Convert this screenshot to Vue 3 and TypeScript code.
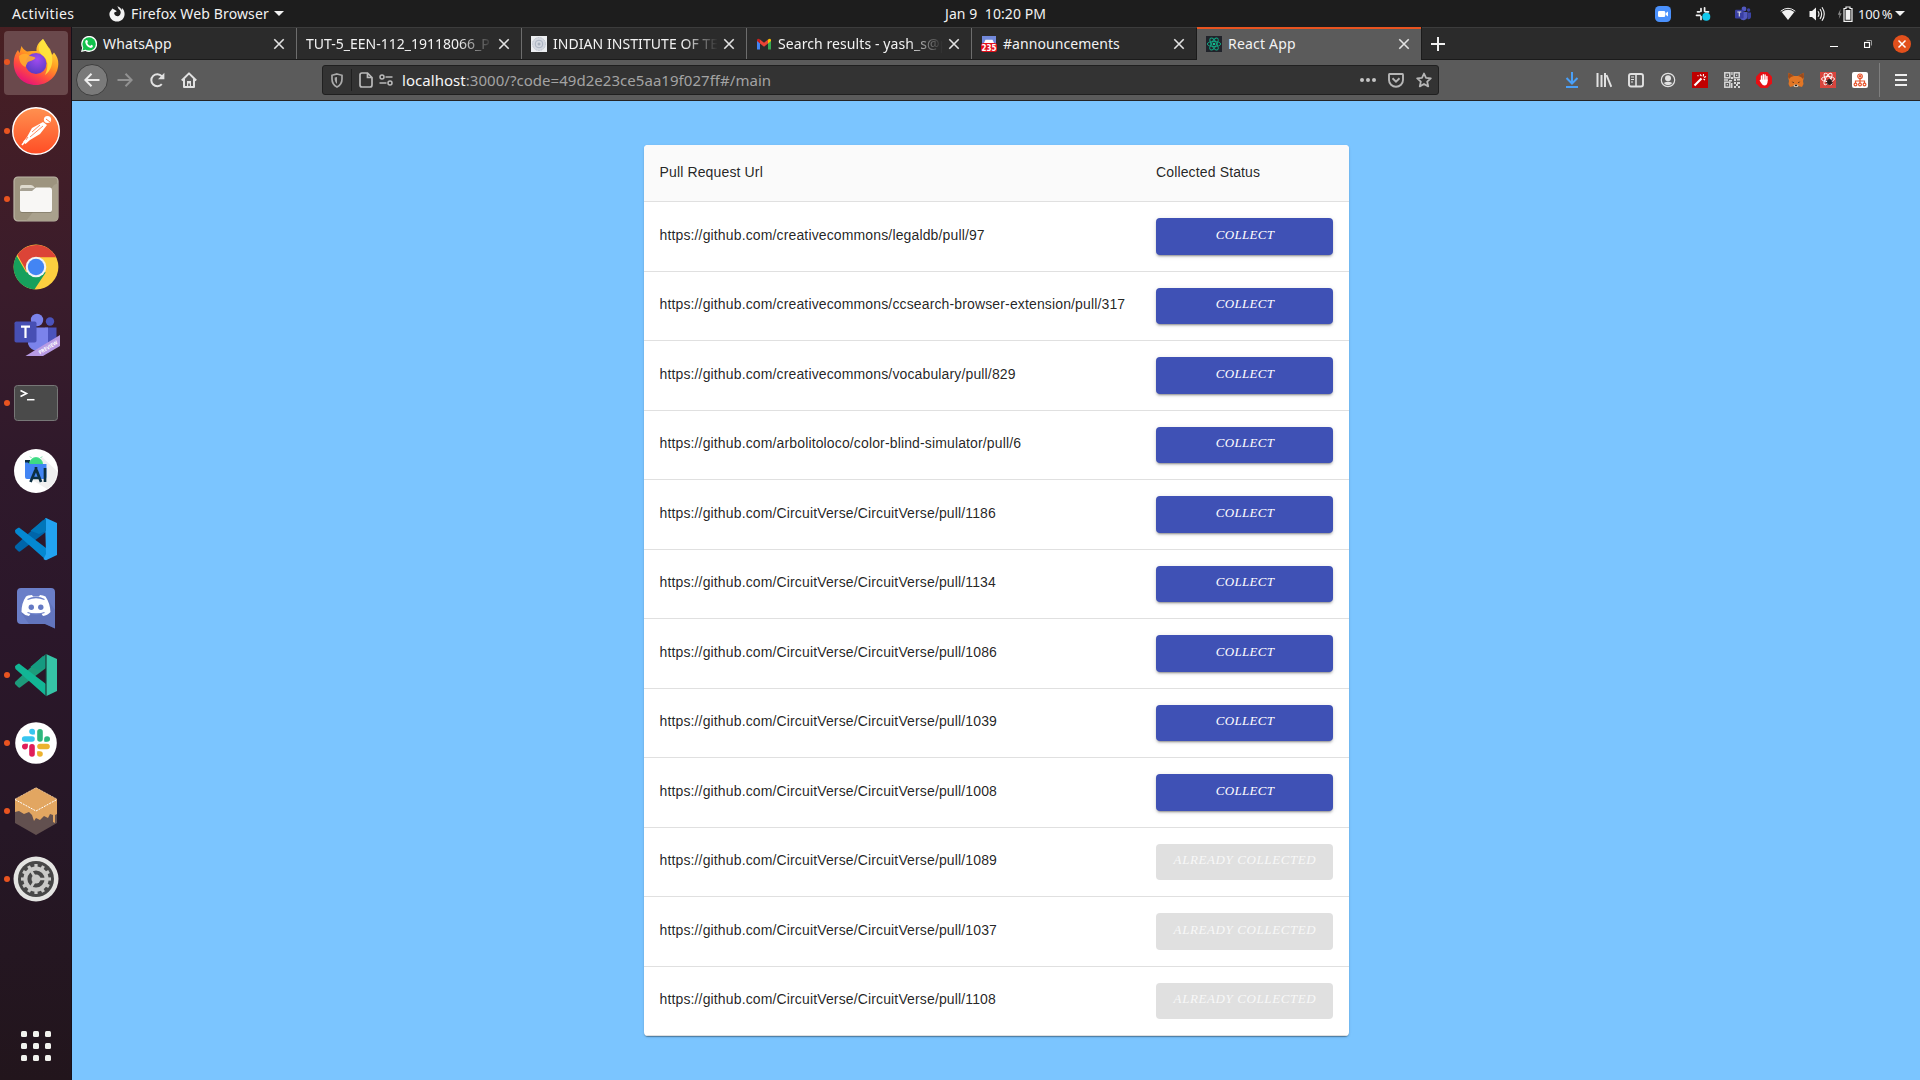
<script setup lang="ts">
interface Tab {
  id: string
  title: string
  spacing: number
  active?: boolean
}

interface PullRequest {
  url: string
  collected: boolean
}

const tabs: Tab[] = [
  { id: 'whatsapp', title: 'WhatsApp', spacing: 0.15 },
  { id: 'tut', title: 'TUT-5_EEN-112_19118066_P', spacing: 0 },
  { id: 'iit', title: 'INDIAN INSTITUTE OF TE', spacing: 0.06 },
  { id: 'gmail', title: 'Search results - yash_s@p', spacing: 0.08 },
  { id: 'discord', title: '#announcements', spacing: 0.06 },
  { id: 'react', title: 'React App', spacing: 0.2, active: true },
]

const gh = 'https://github.com/'
const pulls: PullRequest[] = [
  { url: gh + 'creativecommons/legaldb/pull/97', collected: false },
  { url: gh + 'creativecommons/ccsearch-browser-extension/pull/317', collected: false },
  { url: gh + 'creativecommons/vocabulary/pull/829', collected: false },
  { url: gh + 'arbolitoloco/color-blind-simulator/pull/6', collected: false },
  { url: gh + 'CircuitVerse/CircuitVerse/pull/1186', collected: false },
  { url: gh + 'CircuitVerse/CircuitVerse/pull/1134', collected: false },
  { url: gh + 'CircuitVerse/CircuitVerse/pull/1086', collected: false },
  { url: gh + 'CircuitVerse/CircuitVerse/pull/1039', collected: false },
  { url: gh + 'CircuitVerse/CircuitVerse/pull/1008', collected: false },
  { url: gh + 'CircuitVerse/CircuitVerse/pull/1089', collected: true },
  { url: gh + 'CircuitVerse/CircuitVerse/pull/1037', collected: true },
  { url: gh + 'CircuitVerse/CircuitVerse/pull/1108', collected: true },
]

const teeth = Array.from({ length: 12 }, (_, i) => i * 30)
</script>

<template>
  <div class="desktop">
    <header class="topbar">
      <span class="activities">Activities</span>
      <svg class="app-glyph" width="16" height="16" viewBox="0 0 16 16"><path d="M8 0.4C9 1 9.7 2 9.6 3.1C11.2 3.8 11.6 5.3 11.4 6.6C11 9.6 8.6 10.4 7 9.6C5.6 9 5 7.6 5.6 6.4L8 5.3L5.2 3.5L3.3 2.6L2.4 4C.8 5.600 .3 7 .4 8.500C.7 12.600 4 15.600 8 15.600C12.400 15.600 15.600 12.300 15.600 8C15.600 5.400 14.600 3.200 12.800 2L13.200 4.200C12 2.300 10.500 .5 8 .4Z" fill="#f2f2f2" /><path d="M5.500 6.600C5.200 9.500 7.700 10.700 9.600 9.900C11.300 9.100 11.800 7.300 11.400 5.700C10.700 4.200 9.300 3.700 8.100 3.900L8.600 5.300Z" fill="#1d1d1d" /></svg>
      <span class="app-name">Firefox Web Browser</span>
      <span class="caret"></span>
      <span class="clock">Jan 9&nbsp; 10:20 PM</span>
      <div class="tray">
        <svg width="16" height="16" viewBox="0 0 16 16"><rect width="16" height="16" rx="4.500" fill="#4a90fb" /><rect x="3" y="5" width="7.200" height="6" rx="1.300" fill="#fff" /><path d="M10.600 7.200L13 5.400V10.600L10.600 8.800Z" fill="#fff" /></svg>
        <svg width="16" height="16" viewBox="0 0 16 16"><g stroke="#f2f2f2" stroke-width="1.700" stroke-linecap="round"><path d="M6 2.500V5.300M9.600 1.800V5.300M2.500 5.800H4.500M10.500 5.800H13.500M1.500 9.300H5M6 10.500V13.500M9.500 9.500V13" /></g><circle cx="11.300" cy="10.800" r="4" fill="#12c9ee" /></svg>
        <svg width="16" height="16" viewBox="0 0 16 16"><circle cx="9" cy="3" r="2.400" fill="#5259c0" /><circle cx="13.600" cy="4" r="1.700" fill="#3c44a5" /><path d="M5 6H12.500V11A4 4 0 0 1 5 12Z" fill="#5259c0" /><path d="M12.500 6.500H16V10.500A2.500 2.500 0 0 1 12.500 13Z" fill="#3c44a5" /><rect y="3.800" width="8.600" height="8.600" rx="1" fill="#393fa2" /><path d="M2.300 6H6.300M4.300 6V10.500" stroke="#ddd" stroke-width="1.100" /></svg>
        <svg class="wifi" width="16" height="16" viewBox="0 0 16 16"><path d="M.7 5.200Q8 -.6 15.300 5.200" fill="none" stroke="#f2f2f2" stroke-width="1" /><path d="M1.700 6.100Q8 1.600 14.300 6.100L8 14Z" fill="#f2f2f2" /></svg>
        <svg class="vol" width="17" height="16" viewBox="0 0 17 16"><path d="M.5 5H3L7 1.500V14.500L3 11H.5Z" fill="#f2f2f2" /><path d="M9 5.200Q11 8 9 10.800M11 3Q14.300 8 11 13M13 1.200Q17.500 8 13 14.800" fill="none" stroke="#f2f2f2" stroke-width="1.100" /></svg>
        <svg class="batt" width="16" height="16" viewBox="0 0 16 16"><path d="M3.500 3L.8 8.700H2.500L1.800 13L4.700 7.300H3Z" fill="#888" /><path d="M7 2.500H9V1H13V2.500H15V15.300H7Z" fill="none" stroke="#f2f2f2" stroke-width="1.200" /><rect x="8.600" y="4" width="4.800" height="9.800" fill="#f2f2f2" /></svg>
        <span class="pct">100&thinsp;%</span>
        <span class="caret"></span>
      </div>
    </header>

    <div class="body">
      <nav class="dock">
        <div class="item running focused">
          <svg width="48" height="48" viewBox="0 0 48 48">
            <defs>
              <linearGradient id="ffBody" x1=".8" y1=".1" x2=".3" y2="1"><stop offset="0" stop-color="#ffe23c" /><stop offset=".4" stop-color="#ff9a22" /><stop offset=".7" stop-color="#ff4a40" /><stop offset="1" stop-color="#e5107c" /></linearGradient>
              <radialGradient id="ffCore" cx=".55" cy=".3" r=".7"><stop offset="0" stop-color="#a04bf0" /><stop offset="1" stop-color="#5a3bc4" /></radialGradient>
            </defs>
            <path d="M31 1C33 3 35 8 38 11C39 13 39.500 15 40 17L42 14.500C45 18 46.500 22 46.300 26C46 38 36 47 24 47C11.500 47 1.700 38 1.700 25C1.700 19.500 3.500 15 6 12L7.500 15L9.500 8C10.500 10 12 12 15 13.500C18 12.500 22 13 24.500 13C24 8 27 4 31 1Z" fill="url(#ffBody)" />
            <circle cx="24" cy="25.500" r="10.500" fill="url(#ffCore)" />
            <path d="M7 18C11 15 15 15 17.500 18C20 18 23 19 23.500 20C21 23 17.500 22.500 15.500 24.500C15 26 14 27 13.500 29C9 27 7 23 7 18Z" fill="#ffab2e" opacity=".9" />
            <path d="M31 1C33 5 37 10 39.500 16C42 24 39 33 33 37C37 28 36 21 30 17C25 13 26 6 31 1Z" fill="#ffe640" opacity=".85" />
          </svg>
        </div>
        <div class="item running">
          <svg width="48" height="48" viewBox="0 0 48 48"><defs><linearGradient id="pm" x1="0" y1="0" x2="0" y2="1"><stop offset="0" stop-color="#ff9150" /><stop offset="1" stop-color="#ff4d25" /></linearGradient></defs><circle cx="24" cy="24" r="23.300" fill="url(#pm)" stroke="#fff" stroke-width="1.400" /><circle cx="35.500" cy="12.500" r="3.600" fill="#fff" /><path d="M31 15L20 21L15 30L11 35L13.500 37L18 33L28 27L35 18Z" fill="#fff" /><path d="M31 19L18 30M28 18L20 25M16 30L11 37" stroke="#ff6b37" stroke-width=".8" /><path d="M34 12L38 15" stroke="#ff7b43" stroke-width="1" /><path d="M14 33L10 38" stroke="#fff" stroke-width="1.600" /></svg>
        </div>
        <div class="item running">
          <svg width="48" height="48" viewBox="0 0 48 48"><rect x="2" y="2" width="44" height="44" rx="4" fill="#9d947f" stroke="#bcb6a6" stroke-width="1.200" /><path d="M42 10L46 8V42Q46 46 42 46H14Z" fill="#a9a18d" /><path d="M8 22V12Q8 10 10 10H19Q21 10 23 13H30V22Z" fill="#dedace" /><rect x="8" y="13" width="32" height="25" rx="2.500" fill="#6e6757" opacity=".5" /><path d="M8 16H20L24 12.500H38Q40 12.500 40 15V35Q40 37 38 37H10Q8 37 8 35Z" fill="#f8f7f5" /></svg>
        </div>
        <div class="item">
          <svg width="48" height="48" viewBox="0 0 48 48"><circle cx="24" cy="24" r="22.400" fill="#fccf3f" /><path d="M24 24L14.300 29.600L4.600 12.800A22.400 22.400 0 0 0 22.600 46.350L33.700 29.600Z" fill="#16a05c" /><path d="M24 14.200H44.100A22.400 22.400 0 0 0 5.400 12L14.500 28Z" fill="#dc4437" /><circle cx="24" cy="24" r="10.300" fill="#f3f3f3" /><circle cx="24" cy="24" r="8.200" fill="#4385f3" /></svg>
        </div>
        <div class="item">
          <svg width="48" height="48" viewBox="0 0 48 48"><circle cx="25" cy="9" r="6.200" fill="#7b83eb" /><circle cx="38" cy="10.500" r="4.200" fill="#4b53bc" /><path d="M33 16.500H44.500V31Q42 37 35 35Z" fill="#4b53bc" /><path d="M17 16.500H36V33Q34 41 25.500 40Q18 39 16 33Z" fill="#7b83eb" /><rect x="2.500" y="10.500" width="22" height="21" rx="1.800" fill="#474fb4" /><path d="M9 15.700H18M13.500 15.700V27" stroke="#fff" stroke-width="2.200" /><path d="M13.500 45L48 24V35L31 45Z" fill="#b79be4" /><text transform="translate(28 43.500) rotate(-31)" textLength="21" lengthAdjust="spacingAndGlyphs" font-family="Open Sans, sans-serif" font-size="5.300" font-weight="700" fill="#fff">PREVIEW</text></svg>
        </div>
        <div class="item running">
          <svg width="48" height="48" viewBox="0 0 48 48"><rect x="2.500" y="6.500" width="43" height="35" rx="3" fill="#4a4a4a" stroke="#777" /><path d="M8.500 11.500L14.500 14.500L8.500 17.500" fill="none" stroke="#fff" stroke-width="1.600" /><path d="M15 20.700H22.500" stroke="#fff" stroke-width="1.500" /></svg>
        </div>
        <div class="item">
          <svg width="48" height="48" viewBox="0 0 48 48"><circle cx="24" cy="24" r="22" fill="#fff" /><path d="M30 10L45 24Q45 36 35 42L17 31Z" fill="#f0f0f0" /><path d="M13 13H18V18H13Z" fill="#0c2f42" /><path d="M17.500 17A6.500 6.500 0 0 1 30.500 17ZM19.500 11L18 9.500M28.500 11L30 9.500" fill="#3ddb84" stroke="#3ddb84" stroke-width=".8" /><path d="M13 15.500H16Q17 17 19 17H34.500V30Q34.500 32 33 32H15Q13 32 13 30Z" fill="#4285f4" /><path d="M24 20V24M23.500 23L18.500 35M24.500 23L29 35M20 31H28M33 21V35" stroke="#0c2f42" stroke-width="2.700" fill="none" /></svg>
        </div>
        <div class="item">
          <svg width="48" height="48" viewBox="0 0 48 48"><path d="M3 33Q2.500 31.500 3.500 30.500L31 5L34 17L8 36.500Q7 37 6 36Z" fill="#0065a9" /><path d="M3 16Q2.500 14.500 7 12.500L34 33V45L3.500 18Z" fill="#0488d1" /><path d="M33 3.200L34 3L45 8V40L34 45.200Q32.500 45 31.500 44L34 39Z" fill="#22a3f1" /><path d="M34 3V16L27 19L18.500 15.800Z" fill="#0176ba" /></svg>
        </div>
        <div class="item">
          <svg width="48" height="48" viewBox="0 0 48 48"><path d="M9 5H39Q43 5 43 9V45.500L33 41H9Q5 41 5 37V9Q5 5 9 5Z" fill="#6a7ec8" /><path d="M16 13L10 31L17 41H33L43 45.500V27L34 14Z" fill="#5265a8" opacity=".35" /><path d="M16 12.500Q18 12 20 12L21 13.500H27L28 12Q31 12 33.500 13.500Q38 20 38.500 29Q35.500 32.500 31 33L29.300 30.500H18.700L17 33Q12 32 9.500 29Q9.500 20 14 13.500Z" fill="#fff" /><circle cx="19.300" cy="24.300" r="2.700" fill="#6479c4" /><circle cx="28.800" cy="24.300" r="2.700" fill="#6479c4" /><path d="M15.500 16.500Q24 12.500 32.500 16.500M15.500 29.500Q24 33 32.500 29.500" stroke="#6a7ec8" stroke-width="1.300" fill="none" /></svg>
        </div>
        <div class="item running">
          <svg width="48" height="48" viewBox="0 0 48 48"><path d="M3 33Q2.500 31.500 3.500 30.500L31 5L34 17L8 36.500Q7 37 6 36Z" fill="#1d9b7b" /><path d="M3 16Q2.500 14.500 7 12.500L34 33V45L3.500 18Z" fill="#12b695" /><path d="M34 3L45 8V40L34 45.200Z" fill="#36c4a6" /><path d="M34 3V16L27 19L18.500 15.800Z" fill="#159a80" /><path d="M34 3V45" stroke="#1c3a37" stroke-width="1.200" /></svg>
        </div>
        <div class="item running">
          <svg width="48" height="48" viewBox="0 0 48 48"><circle cx="24" cy="24" r="20.800" fill="#fff" /><g stroke-width="5.600" stroke-linecap="round"><path d="M12.700 20H20" stroke="#36c5f0" /><path d="M20 12.600H20.200" stroke="#36c5f0" /><path d="M28 12.800V20" stroke="#2eb67d" /><path d="M35 20H35.200" stroke="#2eb67d" /><path d="M28 27.500H35" stroke="#ecb22e" /><path d="M27.900 35H28" stroke="#ecb22e" /><path d="M20 27.800V35" stroke="#e01e5a" /><path d="M12.800 27.600H13" stroke="#e01e5a" /></g><path d="M20 15.400H22.800V12.600Z" fill="#36c5f0" /><path d="M32.300 20V22.800H35Z" fill="#2eb67d" /><path d="M28 32.200H25.200V35Z" fill="#ecb22e" /><path d="M13 24.800H15.800V27.600Z" fill="#e01e5a" /></svg>
        </div>
        <div class="item running">
          <svg width="48" height="48" viewBox="0 0 48 48"><path d="M3 12L24 24L45 12V36L24 48L3 36Z" fill="#62504f" /><path d="M24 .5L45 12V27L43 28V36L41 35V28L38 27L36 31L32 29L28 33L24 31L22 34L20 28L17 25L12 27L7 24L3 25V12Z" fill="#e2a661" /><path d="M3 12.500L24 24L45 12.500" fill="none" stroke="#fff" stroke-width="1" stroke-dasharray="2 1" /><path d="M3 12L24 .7L45 12" fill="none" stroke="#f3dfc8" stroke-width=".5" stroke-dasharray="2 1" /></svg>
        </div>
        <div class="item running">
          <svg width="48" height="48" viewBox="0 0 48 48"><circle cx="24" cy="24" r="22.500" fill="#e4e4e2" /><circle cx="24" cy="24" r="18" fill="#474747" /><g fill="#c9c9c7"><rect v-for="a in teeth" :key="a" x="22.400" y="9" width="3.200" height="5" :transform="`rotate(${a} 24 24)`" /></g><circle cx="24" cy="24" r="10.600" fill="none" stroke="#c9c9c7" stroke-width="4" /><circle cx="24" cy="24" r="4.500" fill="#c9c9c7" /><path d="M24 24L33 24M24 24L19.500 16.500M24 24L19.500 31.500" stroke="#c9c9c7" stroke-width="2.600" /></svg>
        </div>
        <div class="apps"><i v-for="n in 9" :key="n"></i></div>
      </nav>

      <main class="browser">
        <div class="tabs">
          <div v-for="t in tabs" :key="t.id" class="tab" :class="[t.id, { active: t.active }]">
            <svg v-if="t.id === 'whatsapp'" class="fav" width="16" height="16" viewBox="0 0 16 16"><path d="M0 16L1.200 11.800A8 8 0 1 1 4.300 14.900Z" fill="#fff" /><circle cx="8.100" cy="7.900" r="6.700" fill="#12c14c" /><path d="M1.500 14.500L2.500 11L5 13.500Z" fill="#12c14c" /><path d="M5.300 4L6.300 4.200L7 6L6.200 7Q7 9 9.200 9.900L10.200 8.800L12 9.700Q12 11.700 9.900 11.900Q5 11 4.200 6Q4.200 4.600 5.300 4Z" fill="#fff" /></svg>
            <svg v-else-if="t.id === 'iit'" class="fav" width="16" height="16" viewBox="0 0 16 16"><rect width="16" height="16" fill="#eceef1" /><circle cx="8" cy="8" r="6.500" fill="#d4d8e0" stroke="#b9bfca" stroke-width="1" stroke-dasharray="1 .7" /><circle cx="8" cy="8" r="3.800" fill="none" stroke="#aab3c2" stroke-width="1" /><circle cx="8" cy="8" r="1.500" fill="#a6b0bd" /></svg>
            <svg v-else-if="t.id === 'gmail'" class="fav" width="16" height="16" viewBox="0 0 16 16"><path d="M1 4V13.500H4V7Z" fill="#4285f4" /><path d="M12 7V13.500H15V4Z" fill="#34a853" /><path d="M4 3.500L8 6.700L12 3.500V7.500L8 10.700L4 7.500Z" fill="#ea4335" /><path d="M1 5V4Q1.500 2 4 3.500V7.500Z" fill="#c5221f" /><path d="M12 3.500Q14.500 2 15 4V5L12 7.500Z" fill="#fbbc04" /></svg>
            <svg v-else-if="t.id === 'discord'" class="fav" width="16" height="16" viewBox="0 0 16 16"><rect x="1" width="14" height="12" fill="#7289da" /><path d="M3 7L4.500 3.800H11.500L13 7Z" fill="#fff" /><rect y="7" width="16" height="9" rx="2.500" fill="#e3101c" /><text x=".5" y="14.500" textLength="15" lengthAdjust="spacingAndGlyphs" font-family="DejaVu Sans, sans-serif" font-weight="700" font-size="8.500" fill="#fff">235</text></svg>
            <svg v-else-if="t.id === 'react'" class="fav" width="16" height="16" viewBox="0 0 16 16"><rect width="16" height="16" fill="#20232a" /><g fill="none" stroke="#12a884" stroke-width=".9"><ellipse cx="8" cy="8" rx="6.700" ry="2.600" /><ellipse cx="8" cy="8" rx="6.700" ry="2.600" transform="rotate(60 8 8)" /><ellipse cx="8" cy="8" rx="6.700" ry="2.600" transform="rotate(120 8 8)" /></g><circle cx="8" cy="8" r="1.300" fill="#14bd94" /></svg>
            <span class="title" :class="{ fade: t.id === 'tut' || t.id === 'iit' || t.id === 'gmail' }" :style="{ letterSpacing: t.spacing + 'px' }">{{ t.title }}</span>
            <svg class="close" width="12" height="12" viewBox="0 0 12 12"><path d="M1.300 1.300L10.700 10.700M10.700 1.300L1.300 10.700" stroke="#e2e2e2" stroke-width="1.600" /></svg>
          </div>
          <svg class="plus" width="14" height="14" viewBox="0 0 14 14"><path d="M7 0V14M0 7H14" stroke="#f0f0f0" stroke-width="2" /></svg>
          <div class="wm">
            <svg width="8" height="18" viewBox="0 0 8 18"><path d="M0 11.500H8" stroke="#fff" stroke-width="1" /></svg>
            <svg width="8" height="8" viewBox="0 0 8 8"><path d="M2.500 .5H7.500V5.500" fill="none" stroke="#999" /><rect x=".5" y="2.500" width="5" height="5" fill="none" stroke="#fff" stroke-width="1.200" /></svg>
            <svg width="18" height="18" viewBox="0 0 18 18"><circle cx="9" cy="9" r="9" fill="#e2501c" /><path d="M5.500 5.500L12.500 12.500M12.500 5.500L5.500 12.500" stroke="#fff" stroke-width="1.500" /></svg>
          </div>
        </div>

        <div class="toolbar">
          <div class="back"><svg width="16" height="16" viewBox="0 0 16 16"><path d="M15.500 8H1.500M7.500 1.800L1.300 8L7.500 14.200" fill="none" stroke="#eee" stroke-width="2" /></svg></div>
          <svg class="b" width="16" height="16" viewBox="0 0 16 16"><path d="M.5 8H14.500M8.500 1.800L14.700 8L8.500 14.200" fill="none" stroke="#929292" stroke-width="2" /></svg>
          <svg class="b" width="16" height="16" viewBox="0 0 16 16"><path d="M12.800 12.200A6 6 0 1 1 12.800 4.200L14 5.600" fill="none" stroke="#e2e2e2" stroke-width="2" /><path d="M15.400 .8V7.200H9Z" fill="#e2e2e2" /></svg>
          <svg class="b" width="16" height="16" viewBox="0 0 16 16"><path d="M.8 8.500L8 1.400L15.200 8.500M3 7V14.900H13V7" fill="none" stroke="#e2e2e2" stroke-width="2" stroke-linejoin="round" /><path d="M6 15V9H10V15H8.800V11.500H7.200V15Z" fill="#e2e2e2" /></svg>
          <div class="urlbar">
            <svg class="shield" width="12" height="15" viewBox="0 0 12 15"><path d="M6 1L11 2.300V6Q11 11.500 6 14Q1 11.500 1 6V2.300Z" fill="none" stroke="#aaa" stroke-width="1.700" /><path d="M6 4L3.700 4.600V6.500Q4 9.500 6 11Z" fill="#aaa" /></svg>
            <i class="sep"></i>
            <svg width="14" height="16" viewBox="0 0 14 16"><path d="M3 1H8.500L13 5.500V13Q13 15 11 15H3Q1 15 1 13V3Q1 1 3 1ZM8.500 1V5.500H13" fill="none" stroke="#bbb" stroke-width="1.700" /></svg>
            <svg class="perm" width="14" height="12" viewBox="0 0 14 12"><path d="M6.500 3H13.500M.5 9H7.500" stroke="#bbb" stroke-width="1.700" /><circle cx="3" cy="3" r="2" fill="none" stroke="#bbb" stroke-width="1.500" /><circle cx="11" cy="9" r="2" fill="none" stroke="#bbb" stroke-width="1.500" /></svg>
            <span class="url"><b>localhost</b>:3000/?code=49d2e23ce5aa19f027ff#/main</span>
            <svg width="16" height="4" viewBox="0 0 16 4"><g fill="#c4c4c4"><circle cx="2" cy="2" r="2" /><circle cx="8" cy="2" r="2" /><circle cx="14" cy="2" r="2" /></g></svg>
            <svg width="16" height="15" viewBox="0 0 16 15"><path d="M1.500 1H14.500Q15 1 15 2V7A7 6.700 0 0 1 1 7V2Q1 1 1.500 1Z" fill="none" stroke="#b6b6b6" stroke-width="1.900" /><path d="M4.500 5.300L8 8.700L11.500 5.300" fill="none" stroke="#b6b6b6" stroke-width="1.900" /></svg>
            <svg width="16" height="16" viewBox="0 0 16 16"><path d="M8 1.500L10 5.900L14.800 6.400L11.200 9.600L12.200 14.400L8 12L3.800 14.400L4.800 9.600L1.200 6.400L6 5.900Z" fill="none" stroke="#b6b6b6" stroke-width="1.800" stroke-linejoin="round" /></svg>
          </div>
          <div class="ext">
            <svg width="16" height="16" viewBox="0 0 16 16"><path d="M8 0V11.500M2.500 6L8 11.500L13.500 6M2 15H14" fill="none" stroke="#4aa0f8" stroke-width="2" /></svg>
            <svg width="16" height="16" viewBox="0 0 16 16"><path d="M1.500 1V15M5.500 3V15M9 1V15" stroke="#e2e2e2" stroke-width="2" /><path d="M10.500 3L15.300 14.800" stroke="#e2e2e2" stroke-width="1.900" /></svg>
            <svg width="16" height="16" viewBox="0 0 16 16"><rect x="1" y="2" width="14" height="12.500" rx="2" fill="none" stroke="#e2e2e2" stroke-width="1.900" /><path d="M8 2V14" stroke="#e2e2e2" stroke-width="1.600" /><path d="M3 5H6M3 7.500H6M3 10H5" stroke="#e2e2e2" stroke-width="1.200" /></svg>
            <svg width="16" height="16" viewBox="0 0 16 16"><circle cx="8" cy="8" r="6.700" fill="none" stroke="#e2e2e2" stroke-width="1.200" /><circle cx="8" cy="6.200" r="3" fill="#e2e2e2" /><path d="M3.700 11Q8 8.500 12.300 11Q8 15.500 3.700 11Z" fill="#e2e2e2" /></svg>
            <svg width="16" height="16" viewBox="0 0 16 16"><rect width="16" height="16" fill="#c00000" /><path d="M2.500 13.500L9.500 6.500" stroke="#fff" stroke-width="2.200" /><path d="M8 2.500L9.500 4M11.500 2L11.300 4.500M14 4.500L12 5.500M13 8L11.500 7M5.500 3.500L6.500 4" stroke="#fff" stroke-width="1.100" /></svg>
            <svg width="16" height="16" viewBox="0 0 16 16"><g fill="none" stroke="#d8d8d8" stroke-width="1.500"><rect x=".8" y=".8" width="5" height="5" /><rect x="10.200" y=".8" width="5" height="5" /><rect x=".8" y="10.200" width="5" height="5" /></g><path d="M2.700 2.700H4V4H2.700ZM12 2.700H13.300V4H12ZM2.700 12H4V13.300H2.700ZM7.300 0H8.600V3H7.300ZM7 5H9V7H7ZM0 7.200H4V8.700H0ZM5 8H8V9.500H5ZM10 7H12V9H10ZM13 7H16V8.500H13ZM7 11H8.500V16H7ZM10 10H12V12H10ZM13 10H16V12H13ZM12 12H14V14H12ZM10 14H12V16H10ZM14 14H16V16H14Z" fill="#d8d8d8" /></svg>
            <svg width="16" height="16" viewBox="0 0 16 16"><path d="M4.700 0H11.300L16 4.700V11.300L11.300 16H4.700L0 11.300V4.700Z" fill="#e60f14" /><path d="M5.500 8.500V4M7.300 7.500V2.800M9.100 7.500V3M10.900 8.500V4.500" stroke="#fff" stroke-width="1.400" stroke-linecap="round" /><path d="M4.800 7.500H11.600V10Q11 13.500 8.500 13.500Q6.500 13.500 5.500 11.500L3.500 8.500Z" fill="#fff" /></svg>
            <svg width="16" height="16" viewBox="0 0 16 16"><path d="M.5 .8L6 4H10L15.500 .8L16 5L15 9L15.500 12L14 15L10 14L8 15.500L6 14L2 15L.5 12L1 9L0 5Z" fill="#e27625" /><path d="M.5 .8L6 4L3 5L1 7L0 5ZM15.500 .8L10 4L13 5L15 7L16 5Z" fill="#9a4b1d" /><path d="M3.500 9.500L6 10.300L5.500 11ZM12.500 9.500L10 10.300L10.500 11Z" fill="#222" /><path d="M5.500 13L7 12.500H9L10.500 13L10 15H6Z" fill="#c9b9a8" /><path d="M7 12.800H9V14H7Z" fill="#222" /></svg>
            <svg width="16" height="16" viewBox="0 0 16 16"><rect width="16" height="16" fill="#d9453d" /><g fill="none" stroke="#fff" stroke-width=".9"><ellipse cx="8" cy="7" rx="6.500" ry="2.500" /><ellipse cx="8" cy="7" rx="6.500" ry="2.500" transform="rotate(60 8 7)" /><ellipse cx="8" cy="7" rx="6.500" ry="2.500" transform="rotate(120 8 7)" /></g><ellipse cx="9.500" cy="10" rx="2.400" ry="3" fill="#2b1b1b" /><path d="M6 8L13 12.500M13 7.500L6.500 13M6 10.500H13" stroke="#2b1b1b" stroke-width=".8" /></svg>
            <svg width="16" height="16" viewBox="0 0 16 16"><rect width="16" height="16" rx="2" fill="#fff" /><g fill="none" stroke="#e8552d" stroke-width="1.200"><circle cx="8" cy="4.300" r="2.300" /><path d="M8 6.500V11M3.500 11V9H12.500V11" /><circle cx="3.500" cy="12.500" r="1.400" /><circle cx="8" cy="12.500" r="1.400" /><circle cx="12.500" cy="12.500" r="1.400" /></g><circle cx="8" cy="4.300" r="1.200" fill="#e8552d" /></svg>
          </div>
          <i class="divider"></i>
          <svg class="menu" width="12" height="12" viewBox="0 0 12 12"><path d="M0 1H12M0 6H12M0 11H12" stroke="#eee" stroke-width="2" /></svg>
        </div>

        <section class="page">
          <div class="card">
            <div class="row head">
              <div class="cell">Pull Request Url</div>
              <div class="cell status">Collected Status</div>
            </div>
            <div v-for="p in pulls" :key="p.url" class="row">
              <div class="cell">{{ p.url }}</div>
              <div class="cell status">
                <button type="button" class="btn" :class="{ done: p.collected }" :disabled="p.collected">
                  {{ p.collected ? 'ALREADY COLLECTED' : 'COLLECT' }}
                </button>
              </div>
            </div>
          </div>
        </section>
      </main>
    </div>
  </div>
</template>

<style>
html,
body {
  margin: 0;
  overflow: hidden;
}
</style>

<style scoped>
* {
  box-sizing: border-box;
}
svg {
  display: block;
  flex: none;
}
.desktop {
  width: 1920px;
  height: 1080px;
  display: flex;
  flex-direction: column;
  font-family: 'Noto Sans', sans-serif;
  overflow: hidden;
}
.topbar {
  height: 27px;
  flex: none;
  background: #1d1d1d;
  color: #f2f2f2;
  display: flex;
  align-items: center;
  font-size: 14px;
  line-height: 26px;
  white-space: nowrap;
}
.activities {
  margin-left: 12px;
  width: 97px;
  letter-spacing: 0.4px;
}
.app-glyph {
  margin-right: 6px;
}
.app-name {
  width: 143px;
  letter-spacing: 0.13px;
}
.caret {
  border: 5px solid transparent;
  border-top-color: #f2f2f2;
  border-bottom: 0;
  flex: none;
}
.clock {
  margin-left: 661px;
  letter-spacing: 0.08px;
}
.tray {
  margin-left: auto;
  padding-right: 15px;
  display: flex;
  align-items: center;
}
.tray svg + svg {
  margin-left: 24px;
}
.tray svg.wifi {
  margin-left: 29px;
}
.tray svg.vol {
  margin-left: 13px;
}
.tray svg.batt {
  margin-left: 11px;
}
.pct {
  width: 37px;
  margin-left: 5px;
  font-size: 13px;
  letter-spacing: -0.15px;
}
.body {
  flex: 1;
  display: flex;
  min-height: 0;
}
.dock {
  width: 72px;
  flex: none;
  display: flex;
  flex-direction: column;
  padding-top: 1px;
  background: linear-gradient(#481f22 0, #451e25 60px, #3a1c2b 260px, #2f192b 440px, #2b172a 600px, #261726 800px, #22151c 1053px);
  border-right: 1px solid #15101a;
}
.item {
  height: 68px;
  flex: none;
  display: flex;
  align-items: center;
  padding-left: 12px;
}
.item.running {
  padding-left: 4px;
}
.item.running::before {
  content: '';
  width: 6px;
  height: 6px;
  border-radius: 50%;
  background: #e95420;
  margin-right: 2px;
}
.item.focused {
  height: 64px;
  width: 64px;
  margin: 3px 0 2px 4px;
  padding: 0 0 2px;
  border-radius: 4px;
  background: #6a494c;
}
.apps {
  margin: auto 0 19px 21px;
  display: grid;
  grid-template-columns: repeat(3, 6px);
  gap: 6px;
}
.apps i {
  height: 6px;
  border-radius: 1.500px;
  background: #f2f2ee;
}
.browser {
  flex: 1;
  display: flex;
  flex-direction: column;
}
.tabs {
  height: 33px;
  flex: none;
  display: flex;
  background: #2b2b2b;
  border-top: 1px solid #3c3c3c;
  border-bottom: 1px solid #1b1b1b;
  color: #f2f2f2;
}
.tab {
  width: 225px;
  flex: none;
  display: flex;
  align-items: center;
  padding: 0 11px 0 9px;
  border-right: 1px solid #6d6d6d;
  font-size: 14px;
  line-height: 30px;
}
.tab.discord {
  border-right-color: #1b1b1b;
}
.tab.active {
  background: #5b5b5b;
  box-shadow: inset 0 2px #e95420;
  margin: -1px 0;
  border-right-color: #1b1b1b;
}
.fav {
  margin-right: 6px;
}
.title {
  flex: 1;
  min-width: 0;
  white-space: nowrap;
}
.title.fade {
  mask-image: linear-gradient(90deg, #000 calc(100% - 36px), transparent calc(100% - 1px));
}
.close {
  margin-left: 4px;
}
.plus {
  margin: 9px 0 0 9px;
}
.wm {
  margin-left: auto;
  padding-right: 9px;
  display: flex;
  align-items: center;
}
.wm svg + svg {
  margin-left: 26px;
}
.wm svg:first-child,
.wm svg:nth-child(2) {
  position: relative;
  left: 1px;
}
.wm svg:last-child {
  margin-left: 22px;
}
.toolbar {
  height: 41px;
  flex: none;
  display: flex;
  align-items: center;
  background: #5b5b5b;
  border-bottom: 1px solid #242424;
  padding-left: 4px;
}
.back {
  width: 32px;
  height: 32px;
  border-radius: 50%;
  background: #7a7a7a;
  border: 1px solid #3f3f3f;
  display: flex;
  align-items: center;
  justify-content: center;
}
.b {
  margin-left: 16px;
}
.toolbar .back + .b {
  margin-left: 9px;
}
.urlbar {
  width: 1117px;
  height: 30px;
  margin-left: 125px;
  border-radius: 3px;
  border: 1px solid #202020;
  background: #333;
  display: flex;
  align-items: center;
  padding: 0 6px 0 8px;
}
.urlbar svg:nth-last-child(-n + 2) {
  margin-left: 12px;
}
.sep {
  width: 1px;
  height: 22px;
  background: #1f1f1f;
  margin: 0 7px 0 8px;
}
.perm {
  margin-left: 6px;
}
.url {
  flex: 1;
  margin-left: 9px;
  color: #a3a3a3;
  font-size: 15px;
  letter-spacing: 0.04px;
}
.url b {
  font-weight: 400;
  color: #f6f6f6;
}
.ext {
  margin-left: 125px;
  display: flex;
  gap: 16px;
}
.divider {
  width: 1px;
  height: 34px;
  background: #7e7e7e;
  margin: 0 15px 0 11px;
}
.page {
  flex: 1;
  background: #7bc5ff;
  padding: 44px 0 0 572px;
}
.card {
  width: 705px;
  height: 891px;
  background: #fff;
  border-radius: 4px;
  overflow: hidden;
  box-shadow: 0 2px 1px -1px rgba(0, 0, 0, 0.2), 0 1px 1px 0 rgba(0, 0, 0, 0.14), 0 1px 3px 0 rgba(0, 0, 0, 0.12);
  font-family: 'Liberation Sans', Arial, sans-serif;
  font-size: 14px;
  color: rgba(0, 0, 0, 0.87);
}
.row {
  height: 69.500px;
  display: flex;
  align-items: center;
  border-bottom: 1px solid #e0e0e0;
}
.row.head {
  height: 57px;
  background: #fafafa;
}
.cell {
  padding-left: 15.500px;
  width: 496px;
  line-height: 20px;
  padding-bottom: 2.600px;
  letter-spacing: 0.01em;
  white-space: nowrap;
}
.head .cell {
  padding-bottom: 2px;
}
.cell.status {
  padding-left: 16px;
  width: 209px;
}
.row:not(.head) .status {
  padding: 0 16px;
}
.btn {
  display: block;
  width: 177px;
  height: 36.500px;
  border: 0;
  border-radius: 4px;
  padding: 0 0 3px 1px;
  background: #3f51b5;
  color: #fff;
  font-family: 'Z003', 'URW Chancery L', 'Liberation Serif', serif;
  font-style: italic;
  font-size: 13px;
  letter-spacing: 0.3px;
  box-shadow: 0 3px 1px -2px rgba(0, 0, 0, 0.2), 0 2px 2px 0 rgba(0, 0, 0, 0.14), 0 1px 5px 0 rgba(0, 0, 0, 0.12);
}
.btn.done {
  background: #e0e0e0;
  color: #f8f8f8;
  letter-spacing: 0.6px;
  box-shadow: none;
}
</style>
